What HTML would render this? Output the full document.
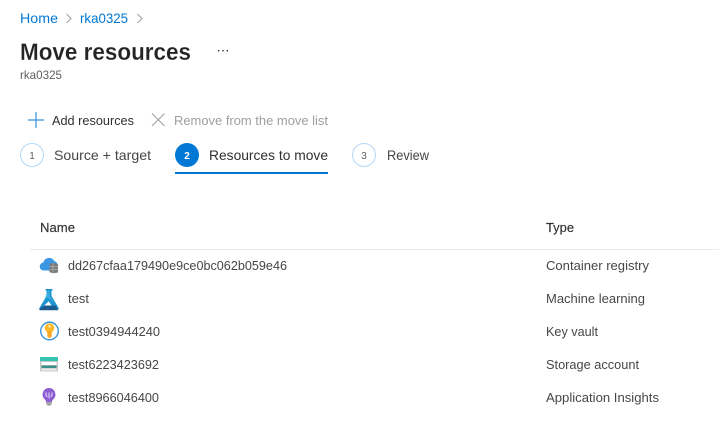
<!DOCTYPE html>
<html><head><meta charset="utf-8"><style>
html,body{margin:0;padding:0;background:#fff;width:719px;height:436px;overflow:hidden}
svg{display:block}
text{font-family:"Liberation Sans",sans-serif;font-size:13px;fill:#323130}
</style></head><body>
<svg width="719" height="436" viewBox="0 0 719 436" xmlns="http://www.w3.org/2000/svg">
<text x="20" y="23" textLength="38" lengthAdjust="spacingAndGlyphs" style="fill:#0078d4;font-size:14px">Home</text>
<path d="M66.500 14l4.500 4.500-4.500 4.500" fill="none" stroke="#a19f9d"/>
<text x="80" y="23" textLength="48" lengthAdjust="spacingAndGlyphs" style="fill:#0078d4;font-size:14px">rka0325</text>
<path d="M137.500 14l4.500 4.500-4.500 4.500" fill="none" stroke="#a19f9d"/>
<text x="20" y="60" textLength="171" lengthAdjust="spacingAndGlyphs" style="font-size:24px;font-weight:bold;fill:#252423;stroke:#fff;stroke-width:.15px">Move resources</text>
<g fill="#323130"><rect x="218" y="50" width="1.4" height="1.4"/><rect x="222.300" y="50" width="1.4" height="1.4"/><rect x="226.600" y="50" width="1.4" height="1.4"/></g>
<text x="20" y="79" textLength="42" lengthAdjust="spacingAndGlyphs" style="font-size:12px;fill:#605e5c">rka0325</text>

<path d="M28 120h16M36 112v16" stroke="#0078d4" stroke-width="1.2" fill="none" opacity=".8"/>
<text x="52" y="125" textLength="82" lengthAdjust="spacingAndGlyphs">Add resources</text>
<path d="M152 113.500l12.500 12.500M164.500 113.500l-12.500 12.500" stroke="#a19f9d" stroke-width="1" fill="none"/>
<text x="174" y="125" textLength="154" lengthAdjust="spacingAndGlyphs" style="fill:#a19f9d">Remove from the move list</text>

<circle cx="32" cy="155" r="11.500" fill="#fff" stroke="#b3d6f7"/>
<text x="32" y="159" text-anchor="middle" style="font-size:10px;fill:#605e5c">1</text>
<text x="54" y="160" textLength="97" lengthAdjust="spacingAndGlyphs" style="font-size:14px;fill:#484644">Source + target</text>

<circle cx="187" cy="155" r="12" fill="#0078d4"/>
<text x="187" y="159" text-anchor="middle" style="font-size:10px;fill:#fff;font-weight:bold">2</text>
<text x="209" y="160" textLength="119" lengthAdjust="spacingAndGlyphs" style="font-size:14px">Resources to move</text>
<rect x="175" y="172" width="153" height="2" fill="#0078d4"/>

<circle cx="364" cy="155" r="11.500" fill="#fff" stroke="#b3d6f7"/>
<text x="364" y="159" text-anchor="middle" style="font-size:10px;fill:#605e5c">3</text>
<text x="387" y="160" textLength="42" lengthAdjust="spacingAndGlyphs" style="font-size:14px;fill:#484644">Review</text>

<text x="40" y="232" textLength="35" lengthAdjust="spacingAndGlyphs" style="stroke:#323130;stroke-width:.15px">Name</text>
<text x="546" y="232" textLength="28" lengthAdjust="spacingAndGlyphs" style="stroke:#323130;stroke-width:.15px">Type</text>
<rect x="30" y="249" width="689" height="1" fill="#edebe9"/>

<text x="68" y="270" textLength="219" lengthAdjust="spacingAndGlyphs" style="fill:#484644">dd267cfaa179490e9ce0bc062b059e46</text>
<text x="68" y="303" textLength="21" lengthAdjust="spacingAndGlyphs" style="fill:#484644">test</text>
<text x="68" y="336" textLength="92" lengthAdjust="spacingAndGlyphs" style="fill:#484644">test0394944240</text>
<text x="68" y="369" textLength="91" lengthAdjust="spacingAndGlyphs" style="fill:#484644">test6223423692</text>
<text x="68" y="402" textLength="91" lengthAdjust="spacingAndGlyphs" style="fill:#484644">test8966046400</text>

<text x="546" y="270" textLength="103" lengthAdjust="spacingAndGlyphs" style="fill:#484644">Container registry</text>
<text x="546" y="303" textLength="99" lengthAdjust="spacingAndGlyphs" style="fill:#484644">Machine learning</text>
<text x="546" y="336" textLength="52" lengthAdjust="spacingAndGlyphs" style="fill:#484644">Key vault</text>
<text x="546" y="369" textLength="93" lengthAdjust="spacingAndGlyphs" style="fill:#484644">Storage account</text>
<text x="546" y="402" textLength="113" lengthAdjust="spacingAndGlyphs" style="fill:#484644">Application Insights</text>

<!-- Container registry icon -->
<path d="M44 270.500a4 4 0 0 1-.6-8 5.800 5.800 0 0 1 10.800-1.500 4.500 4.500 0 0 1 3.300 4.300v5.200z" fill="#3b97e3"/>
<path d="M49.500 264l3.500-1.300 5 1.500v8.300l-5 .8-3.500-1z" fill="#7a7a7a"/>
<path d="M49.500 266.500l3.500.5 5-.7M49.500 269.300l3.500.5 5-.7M53 263v10" stroke="#b5b5b5" stroke-width=".7" fill="none"/>

<!-- Machine learning icon -->
<path d="M45.500 289h7v1.500h-1v5.500l7 11.800q.8 1.400-1 1.400H40.500q-1.800 0-1-1.400l7-11.800v-5.500h-1z" fill="#1b93cf"/>
<path d="M47.500 290.500h2.500v6l4 6.500-6.500-5.500-5 5.500z" fill="#5cc3ee" opacity=".5"/>
<path d="M44.200 305.500l4.600-4.200 2.700 4.200z" fill="#fff"/>
<path d="M44 305.500h11.500l2.900 4.700H40.500q-1.800 0-1-1.400z" fill="#1d5a8f"/>

<!-- Key vault icon -->
<circle cx="49.500" cy="331" r="8.800" fill="#fff" stroke="#2a8fdb" stroke-width="1.300"/>
<circle cx="49.500" cy="328" r="4.800" fill="#fcb92c"/>
<path d="M47.300 331h4.400v5.500l-2.200 2-2.200-2z" fill="#f5a623"/>
<circle cx="49.500" cy="326.500" r="1.200" fill="#fff3c4"/>

<!-- Storage icon -->
<rect x="40" y="357" width="18" height="14.500" fill="#c8c8c8"/>
<rect x="40" y="357" width="18" height="4" fill="#37c2b1"/>
<rect x="41.500" y="362" width="15" height="3" fill="#fff"/>
<rect x="41.500" y="365.500" width="15" height="2.500" fill="#3a8f88"/>
<rect x="41.500" y="368.500" width="15" height="2.200" fill="#e8e8e8"/>

<!-- App Insights icon -->
<path d="M49 388a6.500 6.500 0 0 1 4.200 11.400c-.8.800-1.300 1.500-1.300 2.600h-5.800c0-1.100-.5-1.800-1.300-2.600A6.500 6.500 0 0 1 49 388z" fill="#8d5dd3"/>
<rect x="46.100" y="402" width="5.800" height="2.500" fill="#a8a8a8"/>
<path d="M47 404.500h4l-.7 1h-2.600z" fill="#8a8a8a"/>
<path d="M46 392.500v2.500q0 1.500 1.500 1.500M52 392.500v2.500q0 1.500-1.500 1.500M49 392.500v6" stroke="#e9dffa" stroke-width="1" fill="none"/>
</svg>
</body></html>
